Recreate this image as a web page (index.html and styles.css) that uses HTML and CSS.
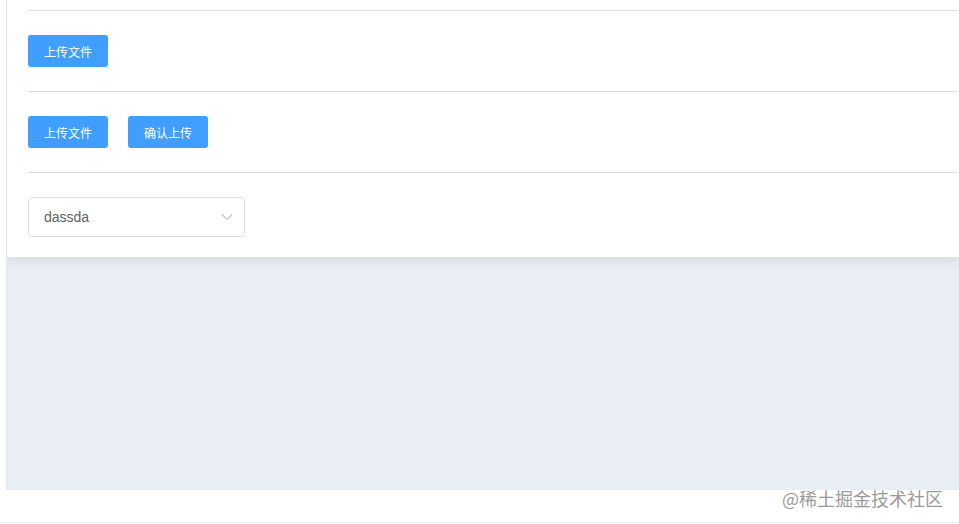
FILE: index.html
```html
<!DOCTYPE html>
<html lang="zh-CN">
<head>
  <meta charset="UTF-8">
  <meta name="viewport" content="width=device-width, initial-scale=1.0">
  <title>上传文件</title>
  <link rel="stylesheet" href="styles.css">
</head>
<body>
  <div class="layout">
    <div class="aside"></div>
    <div class="main">
      <div class="card">
        <div class="row">
          <button class="btn">上传文件</button>
        </div>
        <div class="row">
          <button class="btn">上传文件</button>
          <button class="btn">确认上传</button>
        </div>
        <div class="row row-last">
          <div class="select">
            <span class="select-value">dassda</span>
            <svg class="select-arrow" width="12" height="8" viewBox="0 0 12 8">
              <path d="M1 1.5 L6 6.5 L11 1.5" fill="none" stroke="#c0c4cc" stroke-width="1.1"/>
            </svg>
          </div>
        </div>
      </div>
    </div>
  </div>

  <!-- footer watermark -->
  <div class="footer">
    <span class="watermark">@稀土掘金技术社区</span>
  </div>
</body>
</html>
```

FILE: styles.css
```css
body {
  margin: 0;
  font-family: 'Liberation Sans', 'Noto Sans CJK SC', sans-serif;
  background: #fff;
}
.layout {
  display: flex;
  height: 490px;
}
.aside {
  width: 6px;
  background: #fff;
  border-right: 1px solid #e4e6ea;
}
.main {
  flex: 1;
  background: #e9edf4;
  overflow: hidden;
}
.card {
  background: #fff;
  padding: 10px 1px 0 21px;
  box-shadow: 0 2px 12px rgba(0, 0, 0, 0.1);
}
.row {
  display: flex;
  gap: 20px;
  padding: 24px 0;
  border-top: 1px solid #dcdfe6;
}
.row-last {
  padding-bottom: 20px;
}
.btn {
  width: 80px;
  height: 32px;
  padding: 0;
  font-family: 'Noto Sans CJK SC', sans-serif;
  font-size: 12px;
  color: #fff;
  background: #409eff;
  border: none;
  border-radius: 3px;
  cursor: pointer;
}
.select {
  width: 189px;
  height: 38px;
  border: 1px solid #dcdfe6;
  border-radius: 4px;
  display: flex;
  align-items: center;
  justify-content: space-between;
  padding: 0 11px 0 15px;
}
.select-value {
  font-size: 14px;
  color: #606266;
}
.footer {
  height: 32px;
  border-bottom: 1px solid #eef0f2;
  display: flex;
  justify-content: flex-end;
  align-items: flex-start;
  padding-right: 16px;
}
.watermark {
  font-family: 'Noto Sans CJK SC', sans-serif;
  font-size: 18px;
  line-height: 20px;
  color: #9a9a9a;
  margin-top: -2px;
}
```
